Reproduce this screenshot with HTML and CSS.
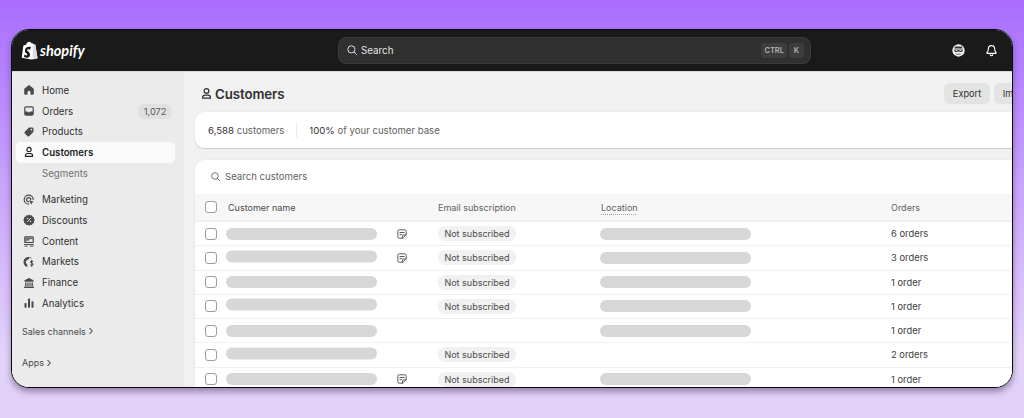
FILE: index.html
```html
<!DOCTYPE html>
<html lang="en">
<head>
<meta charset="utf-8">
<title>Shopify Customers</title>
<link rel="stylesheet" href="styles.css">
</head>
<body>
<svg class="defs" width="0" height="0" aria-hidden="true">
  <symbol id="note" viewBox="0 0 20 20"><path d="M5.500 3h9A2.500 2.500 0 0 1 17 5.500V11l-6 6H5.500A2.500 2.500 0 0 1 3 14.500v-9A2.500 2.500 0 0 1 5.500 3Z" fill="none" stroke="currentColor" stroke-width="1.500" stroke-linejoin="round"/><path d="M6.500 7.500h7M6.500 11h3M11 17v-4a1.500 1.500 0 0 1 1.500-1.500H17" fill="none" stroke="currentColor" stroke-width="1.500" stroke-linecap="round"/></symbol>
  <symbol id="search" viewBox="0 0 20 20"><circle cx="9" cy="9" r="6" fill="none" stroke="currentColor" stroke-width="1.600"/><path d="m13.500 13.500 4 4" fill="none" stroke="currentColor" stroke-width="1.600" stroke-linecap="round"/></symbol>
  <symbol id="person" viewBox="0 0 20 20"><circle cx="10" cy="6" r="3.600" fill="none" stroke="currentColor" stroke-width="1.900"/><path d="M4 17.200v-1c0-2.300 1.600-3.700 3.500-3.700h5c1.900 0 3.500 1.400 3.500 3.700v1Z" fill="none" stroke="currentColor" stroke-width="1.900" stroke-linejoin="round"/></symbol>
</svg>
<div class="frame">
  <header class="topbar">
    <div class="brand">
      <svg class="bag" viewBox="0 0 20 22" aria-hidden="true"><path d="M2.800 5.200 6 4.300C6.600 2 8.100.6 9.700.6c.6 0 1 .2 1.300.6.600 0 1.300.4 1.700 1.700l1-.3.300.1.800 1 2 .2.200.2L19.500 20l-7.300 1.700L.8 19.500Z" fill="#fff"/><path d="M13.700 2.600 13.800 21.500l5.700-1.500-2.800-15.700-2-.2Z" fill="#dcdcdc"/><path d="M11.400 7.800l-.7 2.200c-.6-.3-1.300-.4-1.900-.4-1.500 0-1.600.9-1.600 1.200 0 1.300 3.400 1.800 3.400 4.800 0 2.400-1.500 3.900-3.500 3.900-2.400 0-3.600-1.500-3.600-1.500l.6-2.200s1.300 1.100 2.300 1.100c.7 0 1-.5 1-1 0-1.700-2.800-1.800-2.800-4.600 0-2.300 1.700-4.600 5-4.600 1.600 0 2.400.6 2.400.6Z" fill="#1a1a1a"/></svg>
      <span class="wordmark">shopify</span>
    </div>
    <div class="global-search">
      <svg class="gs-icon"><use href="#search"/></svg>
      <span class="gs-text">Search</span>
      <span class="key">CTRL</span>
      <span class="key">K</span>
    </div>
    <div class="top-actions">
      <svg class="top-icon" viewBox="0 0 20 20" aria-hidden="true"><circle cx="10" cy="10" r="9.500" fill="#f3f3f3"/><path d="M5 4h10l1.500 3h-13Z" fill="#3a3a3a"/><path d="M3.500 8.500h13v2.500l-2.500 1.500-4-1-4 1-2.500-1.500Z" fill="#3a3a3a"/><path d="M5.500 10h3M11.500 10h3" stroke="#f3f3f3" stroke-width="1.200"/><path d="M6.500 15h7v1.300h-7Z" fill="#3a3a3a"/></svg>
      <svg class="top-icon" viewBox="0 0 20 20" aria-hidden="true"><path d="M10 2.500c-3 0-4.800 2.200-4.800 5 0 3.400-1.700 4.700-2.200 5.700-.3.700.1 1.300.8 1.300h12.400c.7 0 1.100-.6.800-1.300-.5-1-2.200-2.300-2.200-5.700 0-2.800-1.800-5-4.800-5Z" fill="none" stroke="#fff" stroke-width="1.700" stroke-linejoin="round"/><path d="M8 16.500c.3 1 1 1.500 2 1.500s1.700-.5 2-1.500" fill="none" stroke="#fff" stroke-width="1.700" stroke-linecap="round"/></svg>
    </div>
  </header>
  <div class="workspace">
    <nav class="sidebar">
      <a class="nav-item">
        <svg class="nav-icon" viewBox="0 0 20 20" aria-hidden="true"><path d="M10 1.800 3 7.200c-.6.500-1 1.200-1 2V16c0 1.200.9 2.100 2 2.100h3.500v-4.400a2.500 2.500 0 0 1 5 0v4.400H16c1.100 0 2-.9 2-2.100V9.200c0-.8-.4-1.500-1-2Z" fill="currentColor"/></svg>
        <span>Home</span>
      </a>
      <a class="nav-item">
        <svg class="nav-icon" viewBox="0 0 20 20" aria-hidden="true"><path fill-rule="evenodd" d="M5 2h10a3 3 0 0 1 3 3v10a3 3 0 0 1-3 3H5a3 3 0 0 1-3-3V5a3 3 0 0 1 3-3Zm-1 8.800h3.200c.5 0 .9.300 1.100.7l.4.700h2.600l.4-.7c.2-.4.600-.7 1.100-.7H16V5c0-.6-.4-1-1-1H5c-.6 0-1 .4-1 1Z" fill="currentColor"/></svg>
        <span>Orders</span>
        <span class="count">1,072</span>
      </a>
      <a class="nav-item">
        <svg class="nav-icon" viewBox="0 0 20 20" aria-hidden="true"><path d="M11 2.500h4.500a2 2 0 0 1 2 2V9c0 .6-.2 1.100-.6 1.500l-6.600 6.500a2 2 0 0 1-2.800 0L3 12.500a2 2 0 0 1 0-2.800l6.500-6.600c.4-.4 1-.6 1.500-.6Zm3 5a1.500 1.500 0 1 0 0-3 1.500 1.500 0 0 0 0 3Z" fill="currentColor" fill-rule="evenodd"/></svg>
        <span>Products</span>
      </a>
      <a class="nav-item nav-active">
        <svg class="nav-icon"><use href="#person"/></svg>
        <span>Customers</span>
      </a>
      <a class="nav-item nav-sub"><span>Segments</span></a>
      <a class="nav-item nav-group">
        <svg class="nav-icon" viewBox="0 0 20 20" aria-hidden="true"><circle cx="9.500" cy="9.500" r="7.500" fill="none" stroke="currentColor" stroke-width="2"/><circle cx="9.500" cy="9.500" r="3.500" fill="none" stroke="currentColor" stroke-width="2"/><path d="M10 10h9v9h-9Z" fill="#ebebeb"/><path d="m10 10 8 3-3 1.500-1.500 3.500Z" fill="currentColor"/></svg>
        <span>Marketing</span>
      </a>
      <a class="nav-item">
        <svg class="nav-icon" viewBox="0 0 20 20" aria-hidden="true"><path d="M10 .8l2.200 1.700 2.800-.4 1 2.600 2.600 1-.4 2.800L19.900 10l-1.700 2 .4 2.800-2.600 1-1 2.600-2.800-.4L10 19.700 8 18l-2.800.4-1-2.600-2.600-1 .4-2.800L.1 10l1.900-1.700-.4-2.800 2.600-1 1-2.600 2.800.4Z" fill="currentColor"/><path d="m7.300 12.800 5.400-5.600" stroke="#ebebeb" stroke-width="1.500" stroke-linecap="round"/><circle cx="7.500" cy="7.700" r="1.200" fill="#ebebeb"/><circle cx="12.500" cy="12.500" r="1.200" fill="#ebebeb"/></svg>
        <span>Discounts</span>
      </a>
      <a class="nav-item">
        <svg class="nav-icon" viewBox="0 0 20 20" aria-hidden="true"><rect x="2" y="2" width="16" height="11.500" rx="2" fill="currentColor"/><rect x="4" y="4" width="12" height="7.500" fill="#ebebeb"/><path d="m4 11.500 3-2.500 2 1 3-3.500 4 1V4H4Z" fill="currentColor" opacity=".75"/><path d="M2.500 15.800h15M3 18.500h4M12 18.500h5" stroke="currentColor" stroke-width="1.600" stroke-linecap="round"/></svg>
        <span>Content</span>
      </a>
      <a class="nav-item">
        <svg class="nav-icon" viewBox="0 0 20 20" aria-hidden="true"><path d="M9.500 1.500a8.500 8.500 0 0 0-1.500 16.900c-1-1.500-1.300-3-.7-4.300L4.500 11.500l1-4L9 6l2-3 4.500 1.500A8.500 8.500 0 0 0 9.500 1.500Z" fill="currentColor"/><path d="M16.500 8.800c-.7-.6-3.800-.8-3.800 1.300 0 2.200 4 1.300 4 3.600 0 2.100-3.200 2-4.300 1.200M14.600 7v10.500" fill="none" stroke="currentColor" stroke-width="1.700" stroke-linecap="round"/></svg>
        <span>Markets</span>
      </a>
      <a class="nav-item">
        <svg class="nav-icon" viewBox="0 0 20 20" aria-hidden="true"><path d="M10 1.500 2.500 5.500V8h15V5.500Z" fill="currentColor"/><path d="M1.800 16h16.400v2.500H1.800ZM3.500 9h2.300v6H3.500Zm3.800 0h2v6h-2Zm3.400 0h2v6h-2Zm3.500 0h2.300v6h-2.300Z" fill="currentColor"/></svg>
        <span>Finance</span>
      </a>
      <a class="nav-item">
        <svg class="nav-icon" viewBox="0 0 20 20" aria-hidden="true"><rect x="2.500" y="10" width="3.400" height="8" rx="1.200" fill="currentColor"/><rect x="8.300" y="2.500" width="3.400" height="15.500" rx="1.200" fill="currentColor"/><rect x="14.100" y="7" width="3.400" height="11" rx="1.200" fill="currentColor"/></svg>
        <span>Analytics</span>
      </a>
      <a class="nav-section nav-section-sales">Sales channels <svg class="chev" viewBox="0 0 10 10" aria-hidden="true"><path d="m3.500 1.800 3.200 3.200-3.200 3.200" fill="none" stroke="currentColor" stroke-width="1.300" stroke-linecap="round" stroke-linejoin="round"/></svg></a>
      <a class="nav-section nav-section-apps">Apps <svg class="chev" viewBox="0 0 10 10" aria-hidden="true"><path d="m3.500 1.800 3.200 3.200-3.200 3.200" fill="none" stroke="currentColor" stroke-width="1.300" stroke-linecap="round" stroke-linejoin="round"/></svg></a>
    </nav>
    <main class="content">
      <div class="page-head">
        <svg class="page-icon"><use href="#person"/></svg>
        <h1>Customers</h1>
        <button class="btn btn-first">Export</button>
        <button class="btn">Import</button>
      </div>
      <section class="card stats">
        <span><b>6,588</b> customers</span>
        <i class="divider"></i>
        <span><b>100%</b> of your customer base</span>
      </section>
      <section class="card customers">
        <div class="table-search">
          <svg class="ts-icon"><use href="#search"/></svg>
          <span>Search customers</span>
        </div>
        <div class="row head">
          <span class="box"></span>
          <span class="h-name">Customer name</span>
          <span></span>
          <span>Email subscription</span>
          <span class="h-loc"><u>Location</u></span>
          <span>Orders</span>
        </div>
        <div class="row">
          <span class="box"></span><span class="bar"></span><svg class="note"><use href="#note"/></svg><span class="pill">Not subscribed</span><span class="bar"></span><span>6 orders</span>
        </div>
        <div class="row">
          <span class="box"></span><span class="bar bar-up"></span><svg class="note"><use href="#note"/></svg><span class="pill">Not subscribed</span><span class="bar"></span><span>3 orders</span>
        </div>
        <div class="row">
          <span class="box"></span><span class="bar"></span><span></span><span class="pill">Not subscribed</span><span class="bar"></span><span>1 order</span>
        </div>
        <div class="row">
          <span class="box"></span><span class="bar bar-up"></span><span></span><span class="pill">Not subscribed</span><span class="bar"></span><span>1 order</span>
        </div>
        <div class="row">
          <span class="box"></span><span class="bar"></span><span></span><span></span><span class="bar"></span><span>1 order</span>
        </div>
        <div class="row">
          <span class="box"></span><span class="bar bar-up"></span><span></span><span class="pill">Not subscribed</span><span></span><span>2 orders</span>
        </div>
        <div class="row">
          <span class="box"></span><span class="bar"></span><svg class="note"><use href="#note"/></svg><span class="pill">Not subscribed</span><span class="bar"></span><span>1 order</span>
        </div>
      </section>
    </main>
  </div>
</div>
</body>
</html>
```
FILE: styles.css
```css
* { box-sizing: border-box; }
html, body { height: 100%; }
body {
  margin: 0;
  height: 418px;
  overflow: hidden;
  padding: 29px 11px 30px;
  background: linear-gradient(180deg, #a96dff 0%, #c9a5fb 45%, #e3d2f9 85%, #e2d2f8 100%);
  font-family: Inter, "Liberation Sans", sans-serif;
  font-size: 9.700px;
  color: #303030;
}
.defs { position: absolute; }
.frame {
  height: 359px;
  border: 1.5px solid #0a0a0a;
  border-radius: 18px;
  overflow: hidden;
  background: #f1f1f1;
  display: flex;
  flex-direction: column;
  box-shadow: 0 4px 6px rgba(60, 40, 90, .45);
}
.topbar {
  height: 41px;
  flex: none;
  background: #1a1a1a;
  display: flex;
  align-items: center;
  padding: 0 0 0 9px;
  position: relative;
}
.brand { display: flex; align-items: center; gap: 2px; width: 317px; flex: none; }
.bag { width: 17px; height: 19px; display: block; }
.wordmark {
  font-family: Lato, sans-serif;
  font-style: italic;
  font-weight: 700;
  font-size: 14.500px;
  color: #fff;
}
.global-search {
  width: 473px;
  height: 27px;
  flex: none;
  background: #303030;
  border: 1px solid #3b3b3b;
  border-radius: 8px;
  display: flex;
  align-items: center;
  padding: 0 6px 1px 7px;
  gap: 3px;
  color: #e3e3e3;
}
.gs-icon { width: 12px; height: 12px; color: #e3e3e3; }
.gs-text { flex: 1; font-size: 9.800px; font-weight: 400; }
.key {
  height: 15px;
  min-width: 15px;
  padding: 0 3px;
  background: #3d3d3d;
  border-radius: 3px;
  font-size: 7.500px;
  line-height: 15px;
  font-weight: 600;
  color: #b5b5b5;
  text-align: center;
}
.key + .key { margin-left: -1px; }
.top-actions { margin-left: 141px; display: flex; gap: 20px; align-items: center; }
.top-icon { width: 13px; height: 13px; display: block; }
.workspace { flex: 1; min-height: 0; display: flex; border-top: 1px solid #d8d8d8; }
.sidebar {
  width: 172px;
  flex: none;
  background: #ebebeb;
  padding: 8px 9px 0 4px;
}
.nav-item {
  height: 20.700px;
  display: flex;
  align-items: center;
  padding: 0 3px 0 7px;
  gap: 7px;
  border-radius: 5px;
  font-weight: 400;
  color: #303030;
}
.nav-icon { width: 12px; height: 12px; flex: none; color: #4a4a4a; }
.nav-active { background: #fafafa; font-weight: 600; color: #1f1f1f; }
.nav-active .nav-icon { color: #1f1f1f; }
.nav-sub { padding-left: 26px; color: #717171; }
.nav-group { margin-top: 6px; }
.count {
  margin-left: auto;
  height: 15px;
  line-height: 15px;
  padding: 0 5.500px;
  background: #e0e0e0;
  border-radius: 6px;
  font-size: 9.300px;
  font-weight: 400;
  color: #5a5a5a;
}
.nav-section {
  display: flex;
  align-items: center;
  gap: 1px;
  height: 14px;
  padding-left: 6px;
  font-size: 9px;
  font-weight: 400;
  color: #4a4a4a;
}
.nav-section-sales { margin-top: 10.500px; }
.nav-section-apps { margin-top: 17.500px; }
.chev { width: 8px; height: 8px; }
.content {
  flex: 1;
  min-width: 0;
  overflow: hidden;
  padding: 11px 0 0 11px;
  background: #f1f1f1;
}
.page-head {
  width: 845px;
  height: 21px;
  display: flex;
  align-items: center;
}
.page-icon { width: 13px; height: 13px; margin-right: 2px; margin-left: 5px; color: #303030; }
h1 { margin: 0; font-size: 13.300px; font-weight: 600; color: #303030; flex: 1; letter-spacing: -.1px; }
.btn {
  height: 21px;
  padding: 0 8px;
  border: 0;
  border-radius: 6px;
  background: #e3e3e3;
  font: 400 9.200px Inter, "Liberation Sans", sans-serif;
  color: #303030;
  width: 46px;
}
.btn-first { margin-right: 4px; }
.card {
  width: 845px;
  background: #fff;
  border-radius: 9px;
  box-shadow: 0 1px 1px rgba(0, 0, 0, .14), 0 0 0 1px rgba(0, 0, 0, .02);
}
.stats {
  margin-top: 8px;
  height: 36px;
  padding-left: 13px;
  display: flex;
  align-items: center;
  color: #616161;
  font-size: 9.600px;
  font-weight: 400;
}
.stats b { font-weight: 400; color: #303030; }
.divider { width: 1px; height: 16px; background: #ececec; margin: 0 12px; }
.customers { margin-top: 12px; overflow: hidden; height: 240px; border-radius: 9px 0 0 0; }
.table-search {
  height: 34px;
  display: flex;
  align-items: center;
  gap: 4px;
  padding: 0 0 1px 15px;
  color: #616161;
  font-size: 9.600px;
  font-weight: 400;
}
.ts-icon { width: 11px; height: 11px; }
.row {
  height: 24.250px;
  display: grid;
  grid-template-columns: 21px 170px 42px 162px 291px 1fr;
  align-items: center;
  padding-left: 10px;
  border-bottom: 1px solid #f1f1f1;
  font-size: 9.400px;
  color: #404040;
}
.head {
  height: 28px;
  background: #f7f7f7;
  border-bottom: 2px solid #f1f1f1;
  font-size: 9px;
  font-weight: 400;
  color: #616161;
}
.h-name { padding-left: 2px; color: #4a4a4a; }
.h-loc { padding-left: 1px; }
.h-loc u { text-decoration: underline dotted #a8a8a8 1px; text-underline-offset: 3px; }
.box {
  width: 12px;
  height: 12px;
  border: 1px solid #9d9d9d;
  border-radius: 3px;
  background: #fff;
}
.bar {
  width: 151px;
  height: 12px;
  border-radius: 6px;
  background: #d7d7d7;
}
.bar-up { transform: translateY(-1.500px); }
.note { width: 12px; height: 12px; color: #4a4a4a; }
.pill {
  width: 78px;
  height: 15px;
  line-height: 15px;
  text-align: center;
  background: #f1f1f1;
  border-radius: 7px;
  font-size: 9px;
  font-weight: 400;
  color: #4a4a4a;
}
```
